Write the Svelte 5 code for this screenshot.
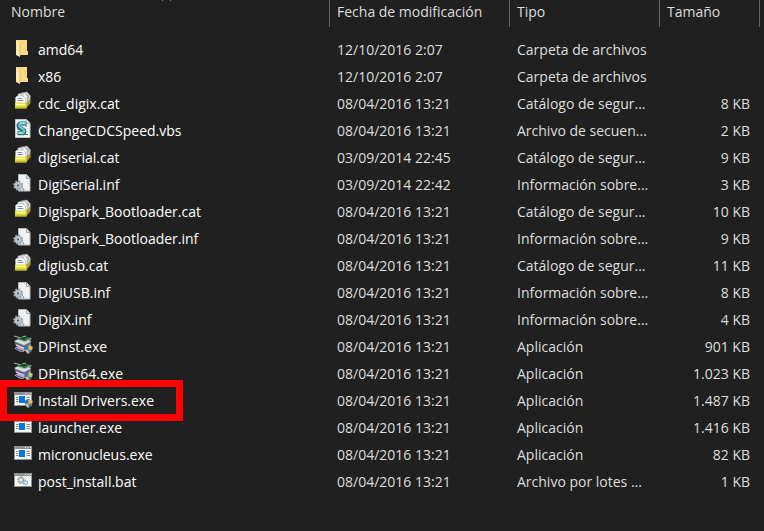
<script>
  const files = [
    ['folder', 'amd64', '12/10/2016 2:07', 'Carpeta de archivos', ''],
    ['folder', 'x86', '12/10/2016 2:07', 'Carpeta de archivos', ''],
    ['cat', 'cdc_digix.cat', '08/04/2016 13:21', 'Catálogo de segur...', '8 KB'],
    ['vbs', 'ChangeCDCSpeed.vbs', '08/04/2016 13:21', 'Archivo de secuen...', '2 KB'],
    ['cat', 'digiserial.cat', '03/09/2014 22:45', 'Catálogo de segur...', '9 KB'],
    ['inf', 'DigiSerial.inf', '03/09/2014 22:42', 'Información sobre...', '3 KB'],
    ['cat', 'Digispark_Bootloader.cat', '08/04/2016 13:21', 'Catálogo de segur...', '10 KB'],
    ['inf', 'Digispark_Bootloader.inf', '08/04/2016 13:21', 'Información sobre...', '9 KB'],
    ['cat', 'digiusb.cat', '08/04/2016 13:21', 'Catálogo de segur...', '11 KB'],
    ['inf', 'DigiUSB.inf', '08/04/2016 13:21', 'Información sobre...', '8 KB'],
    ['inf', 'DigiX.inf', '08/04/2016 13:21', 'Información sobre...', '4 KB'],
    ['driver', 'DPinst.exe', '08/04/2016 13:21', 'Aplicación', '901 KB'],
    ['driver', 'DPinst64.exe', '08/04/2016 13:21', 'Aplicación', '1.023 KB'],
    ['admin', 'Install Drivers.exe', '08/04/2016 13:21', 'Aplicación', '1.487 KB'],
    ['exe', 'launcher.exe', '08/04/2016 13:21', 'Aplicación', '1.416 KB'],
    ['exe', 'micronucleus.exe', '08/04/2016 13:21', 'Aplicación', '82 KB'],
    ['bat', 'post_install.bat', '08/04/2016 13:21', 'Archivo por lotes ...', '1 KB']
  ].map(([icon, name, date, type, size]) => ({ icon, name, date, type, size }));
  const marked = 'Install Drivers.exe';
</script>

{#snippet shield()}
  <path d="M11.5 13.500q2.500-.2 4-1.500q1.500 1.300 4 1.500q.3 5-4 7.700q-4.300-2.700-4-7.700z" fill="#2479cb" />
  <path d="M15.500 12q1.500 1.300 4 1.500q.1 2-.4 3.200h-3.600zM11.900 16.700h3.600v4.500q-2.700-1.800-3.600-4.500z" fill="#f6bd3a" />
{/snippet}

{#snippet fileIcon(kind)}
  <svg class="icon" viewBox="0 0 20 27" aria-hidden="true">
    {#if kind === 'folder'}
      <path d="M3 4h11v11h1v4H5z" fill="#f3cf72" />
      <path d="M6 4h8v11h1v4H6z" fill="#f8da86" />
      <path d="M3 4l4 2v15l-4-2z" fill="#ffe9a8" />
      <path d="M7 6v14" stroke="#dcb257" stroke-width=".7" />
    {:else if kind === 'cat'}
      <path d="M8 3l6-1 3.500 4-1 6.500-4 3H8z" fill="#dfe0e1" stroke="#8d9092" stroke-width=".5" />
      <path d="M13 4.500l2.500 1.500-.5 3M14.500 9.500l-1 2" fill="none" stroke="#8a8d90" stroke-width=".8" />
      <path d="M5 4l6.500-1 2.800 3.200-.3 8H5z" fill="#f4f5f5" stroke="#97999b" stroke-width=".6" />
      <path d="M2.500 7.500L4 6h6l2.500 2.500V15h-10z" fill="#fff" stroke="#a6a8aa" stroke-width=".6" />
      <path d="M7 5h4" stroke="#a5b1bd" stroke-width=".8" />
      <path d="M4.500 8.500h5M4.500 10.500h6" stroke="#6c90c0" />
      <path d="M13 13l4.500-4.500v4.500L13 18.500z" fill="#a5a133" />
      <path d="M2 12.500h11.500v6H2z" fill="#dedb3c" />
      <path d="M3 14.500h9.500" stroke="#ffffa4" stroke-width="1.500" />
      <path d="M2 18h11.500" stroke="#a19e24" />
    {:else if kind === 'vbs'}
      <path d="M2.500 2.500h11l3.500 3.500v14.500H2.500z" fill="#f2f5f5" stroke="#bec4c5" />
      <path d="M13 2.500V6.500h4" fill="#dce1e3" stroke="#929a9c" stroke-width=".7" />
      <path d="M13.500 6.500H7.500Q4.500 7.500 6 10l5 3.300q1.200 2.200-1 3H4.500" fill="none" stroke="#226a71" stroke-width="4" />
      <path d="M13 6.300H7.500Q5.500 7.500 6.500 9.500l4.500 3.700q1 2-1.500 2.800H5" fill="none" stroke="#62c8ca" stroke-width="2.300" />
      <path d="M7 6h5M6 16h4" stroke="#c7f5f1" />
      <path d="M11.500 8.500l2 1M4 12l4 1.500M10 17.500h5" stroke="#53696c" stroke-width="1" />
    {:else if kind === 'inf'}
      <path d="M5.500 3.500H13.500l3.500 4v12.500H5.500z" fill="#f1f2f2" stroke="#b5b8b9" />
      <path d="M13.500 3.500V7.500H17" fill="#d9dcdd" stroke="#8d9295" stroke-width=".7" />
      <circle cx="5" cy="14.500" r="4" fill="none" stroke="#8c969d" stroke-width="2" stroke-dasharray="1.800 1.342" />
      <circle cx="5" cy="14.500" r="2.700" fill="#eef2f4" stroke="#b4bfc8" stroke-width="2" />
      <circle cx="5" cy="14.500" r="1.200" fill="#58636c" />
      <circle cx="9" cy="18.500" r="1.800" fill="#d3dce2" stroke="#7e8991" stroke-dasharray="1.200 .6" />
    {:else if kind === 'driver'}
      <path d="M1.500 15.500q2-2.500 5-1.500l6 3-2.500 2q-4-.2-6-2z" fill="#b9addb" />
      <path d="M3 15.500l7 2.500" stroke="#4e447c" />
      <path d="M1.500 8.500L8 6l10 3.500v3L11 16.500 3 13z" fill="#8e8aa6" />
      <path d="M1 8l7-3 10.500 3L11 12z" fill="#dadce2" />
      <path d="M1.500 9.500L11 13.500l7-3.500" fill="none" stroke="#50515c" />
      <path d="M3 12l8 3.300" stroke="#dcd7ef" stroke-width="1.300" />
      <path d="M3.500 6l6-3 9 2.200-6.500 3.300z" fill="#2d7544" />
      <path d="M5 6.800l7 2.200 6.500-3.300" fill="none" stroke="#b5bfb5" stroke-width=".8" />
      <path d="M8 5.500l3-1.500 3 1-3 1.500z" fill="#1d2b21" />
      <path d="M1 3l6 1.700M13 3l-3 .8" stroke="#a8b0ad" />
      <path d="M14 7l4-2" stroke="#70a77d" />
      {@render shield()}
    {:else}
      <path d="M1 5h18v14H1z" fill="#8e9294" />
      <path d="M2 8h16v10H2z" fill="#f7f7f6" />
      <path d="M12 6.500h1M14.500 6.500h1M17 6.500h1" stroke="#e7e8e8" />
      {#if kind === 'bat'}
        <circle cx="8" cy="12" r="3" fill="#e6e6e4" stroke="#8b8e8f" stroke-width="1.500" stroke-dasharray="1.600 .75" />
        <circle cx="8" cy="12" r="1.500" fill="#fff" stroke="#a7a9aa" stroke-width=".8" />
        <circle cx="12.500" cy="14.500" r="2" fill="#e1f2fc" stroke="#7ba5c4" stroke-width="1.500" stroke-dasharray="1.300 .6" />
      {:else}
        <path d="M3 10.500h2.500M3 12.500h2.500M3 14.500h2.500M13.500 10.500H17M13.500 12.500H17M13.500 14.500H17" stroke="#85898c" />
        <path d="M6 9h6v7H6z" fill="#0878d8" />
      {/if}
      {#if kind === 'admin'}{@render shield()}{/if}
    {/if}
  </svg>
{/snippet}

<main>
  <table>
    <colgroup>
      <col />
      <col class="date" />
      <col class="type" />
      <col class="size" />
    </colgroup>
    <thead>
      <tr>
        <th scope="col">
          Nombre
          <svg class="sort" viewBox="0 0 10 1" aria-hidden="true"><path d="M0 0h1v1H0zM8 0h1v1H8z" /></svg>
        </th>
        <th scope="col">Fecha de modificación</th>
        <th scope="col">Tipo</th>
        <th scope="col">Tamaño</th>
      </tr>
    </thead>
    <tbody>
      {#each files as file}
        <tr>
          <td>
            <div class="name" class:marked={file.name === marked}>
              {@render fileIcon(file.icon)}
              <span>{file.name}</span>
            </div>
          </td>
          <td>{file.date}</td>
          <td>{file.type}</td>
          <td>{file.size}</td>
        </tr>
      {/each}
    </tbody>
  </table>
</main>

<style>
  :global(body) {
    margin: 0;
    background: #202020;
  }
  main {
    padding-right: 4px;
    background: #202020;
    color: #dedede;
    font: 14px/27px "Segoe UI", "Open Sans", "Noto Sans", sans-serif;
  }
  table {
    width: 100%;
    table-layout: fixed;
    border-collapse: separate;
    border-spacing: 0;
  }
  .date {
    width: 180px;
  }
  .type {
    width: 150px;
  }
  .size {
    width: 100px;
  }
  th,
  td {
    height: 27px;
    padding: 0 0 0 7px;
    font-weight: 400;
    text-align: left;
    white-space: nowrap;
  }
  th {
    position: relative;
    box-sizing: border-box;
    border-right: 1px solid #636363;
    line-height: 24px;
    vertical-align: top;
  }
  th:first-child {
    padding-left: 11px;
  }
  thead::after {
    content: "";
    display: block;
    height: 9px;
  }
  td:first-child {
    padding: 0;
    color: #fff;
  }
  td:last-child {
    padding-right: 10px;
    text-align: right;
  }
  .name {
    position: relative;
    display: flex;
    gap: 5px;
    padding-left: 13px;
  }
  .icon {
    flex: none;
    width: 20px;
    height: 27px;
  }
  .sort {
    position: absolute;
    top: 0;
    left: 162px;
    width: 10px;
    height: 1px;
    fill: #858585;
  }
  .marked::after {
    content: "";
    position: absolute;
    z-index: 1;
    top: -7px;
    bottom: -7px;
    left: 0;
    width: 169px;
    border: 7px solid #fe0000;
  }
</style>
